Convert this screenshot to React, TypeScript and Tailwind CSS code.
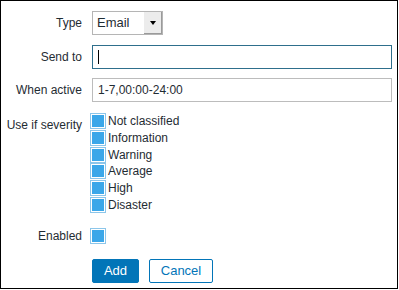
const severities = ['Not classified', 'Information', 'Warning', 'Average', 'High', 'Disaster'];

const Checkbox = () => (
	<span className="box-border flex h-[16px] w-[16px] shrink-0 items-center justify-center border border-[#8cc6ea] bg-white">
		<span className="block h-[12px] w-[12px] bg-[#3ba7e9]" />
	</span>
);

const Label = ({ children, className = '' }: { children: React.ReactNode; className?: string }) => (
	<div className={`w-[81px] shrink-0 text-right ${className}`}>{children}</div>
);

const App = () => {
	return (
		<div className="box-border h-[289px] w-[398px] border border-black bg-white pt-[10px] text-[12px] text-[#1f2c33]" style={{ fontFamily: '"Liberation Sans", Arial, sans-serif' }}>
			<div className="flex h-[24px] items-center gap-[10px]">
				<Label>Type</Label>
				<div className="box-border flex h-[24px] w-[71px] items-stretch border border-[#b5b5b5] bg-white">
					<span className="flex flex-1 items-center pl-[4px] text-[13px]">Email</span>
					<span className="flex w-[18px] items-center justify-center border-b border-r border-[#9a9a9a] bg-[#ececec]">
						<span className="block h-0 w-0 border-x-[3px] border-t-[4px] border-x-transparent border-t-black" />
					</span>
				</div>
			</div>

			<div className="mt-[10px] flex h-[24px] items-center gap-[10px]">
				<Label>Send to</Label>
				<div className="box-border flex h-[24px] w-[300px] items-center border border-[#2e6f8c] bg-white pl-[5px]">
					<span className="block h-[14px] w-px bg-black" />
				</div>
			</div>

			<div className="mt-[9px] flex h-[24px] items-center gap-[10px]">
				<Label>When active</Label>
				<div className="box-border flex h-[24px] w-[300px] items-center border border-[#bcbcbc] bg-white pl-[5px] text-[12px]">
					1-7,00:00-24:00
				</div>
			</div>

			<div className="mt-[11px] flex gap-[8px]">
				<Label className="pt-[3px]">Use if severity</Label>
				<div className="flex flex-col">
					{severities.map((s) => (
						<div key={s} className="flex h-[16.67px] items-center">
							<Checkbox />
							<span className="ml-[2px] leading-none">{s}</span>
						</div>
					))}
				</div>
			</div>

			<div className="mt-[15px] flex h-[17px] items-center gap-[8px]">
				<Label>Enabled</Label>
				<Checkbox />
			</div>

			<div className="mt-[14px] flex gap-[10px] pl-[91px]">
				<button type="button" className="box-border h-[24px] w-[47px] rounded-[2px] border border-[#0275b8] bg-[#0275b8] text-[13px] text-white">
					Add
				</button>
				<button type="button" className="box-border h-[24px] w-[64px] rounded-[2px] border border-[#0275b8] bg-white text-[13px] text-[#0275b8]">
					Cancel
				</button>
			</div>
		</div>
	);
};

export default App;
